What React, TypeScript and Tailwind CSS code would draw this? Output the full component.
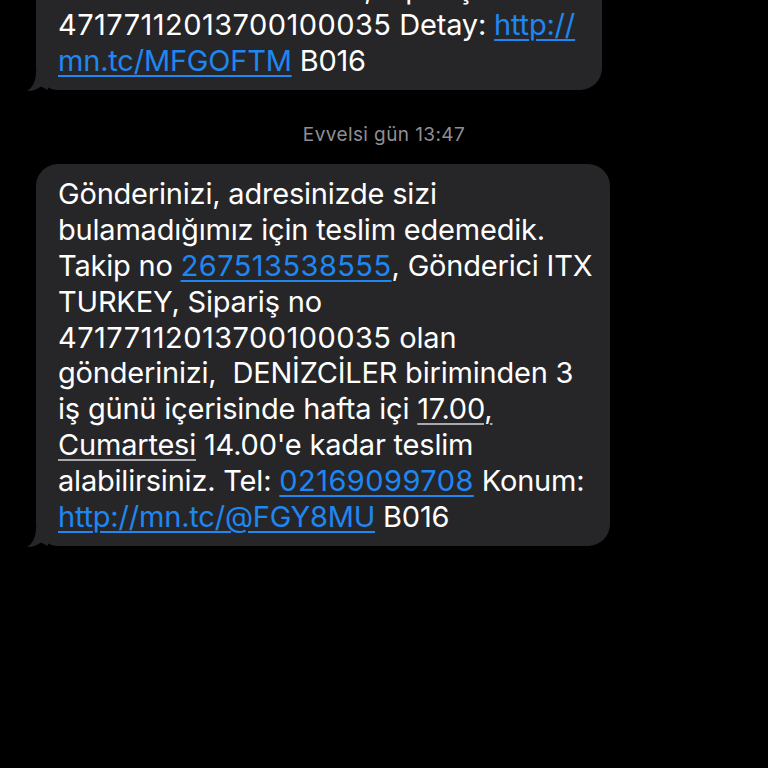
import React from 'react';

// Link and data-detector styles used inside the bubbles
const Link = ({ children }: { children: React.ReactNode }) => (
  <span className="text-[#1f87f2] underline decoration-[#1f87f2] decoration-[1.5px] underline-offset-[4px]">
    {children}
  </span>
);

const Detected = ({ children }: { children: React.ReactNode }) => (
  <span className="underline decoration-[#a8a8ad] decoration-[1.5px] underline-offset-[4px]">
    {children}
  </span>
);

// digits in the reference run a little wider than Inter's
const Num = ({ children }: { children: React.ReactNode }) => (
  <span className="tracking-[0.45px]">{children}</span>
);

// Tail at the bottom-left of an incoming bubble
const Tail = () => (
  <svg
    className="absolute left-[-10px] bottom-[-2px]"
    width="24"
    height="20"
    viewBox="0 0 24 20"
  >
    <path d="M10 0 C10 10, 6 16, 1 19 C6 19.5, 11 17.5, 15 14.5 L22 18 L22 0 Z" fill="#262628" />
  </svg>
);

const Bubble = ({ lines, width, className = '' }: { lines: React.ReactNode[]; width: string; className?: string }) => (
  <div className={`relative ml-[36px] rounded-[22px] bg-[#262628] pl-[22px] py-3 ${width} ${className}`}>
    {lines.map((line, i) => (
      <div key={i} className="whitespace-pre text-[29px] leading-[35.8px] text-white tracking-[-0.2px]">
        {line}
      </div>
    ))}
    <Tail />
  </div>
);

function App() {
  const first = [
    'Gönderici ITX TURKEY, Sipariş no',
    <><Num>47177112013700100035</Num> Detay: <Link>http://</Link></>,
    <><Link>mn.tc/MFGOFTM</Link> B016</>,
  ];

  const second = [
    'Gönderinizi, adresinizde sizi',
    'bulamadığımız için teslim edemedik.',
    <>Takip no <Link><Num>267513538555</Num></Link>, Gönderici ITX</>,
    'TURKEY, Sipariş no',
    <><Num>47177112013700100035</Num> olan</>,
    'gönderinizi,  DENİZCİLER biriminden 3',
    <>iş günü içerisinde hafta içi <Detected>17.00,</Detected></>,
    <><Detected>Cumartesi</Detected> 14.00'e kadar teslim</>,
    <>alabilirsiniz. Tel: <Link><Num>02169099708</Num></Link> Konum:</>,
    <><Link>http://mn.tc/@FGY8MU</Link> B016</>,
  ];

  return (
    <div
      className="h-screen w-full overflow-hidden bg-black"
      style={{ fontFamily: 'Inter, "Noto Sans", sans-serif' }}
    >
      <Bubble lines={first} width="w-[566px]" className="mt-[-41px]" />
      <div className="mt-[35px] mb-[19px] text-center text-[19px] leading-5 tracking-[0.4px] text-[#8e8e93]">
        Evvelsi gün 13:47
      </div>
      <Bubble lines={second} width="w-[574px]" />
    </div>
  );
}

export default App;
